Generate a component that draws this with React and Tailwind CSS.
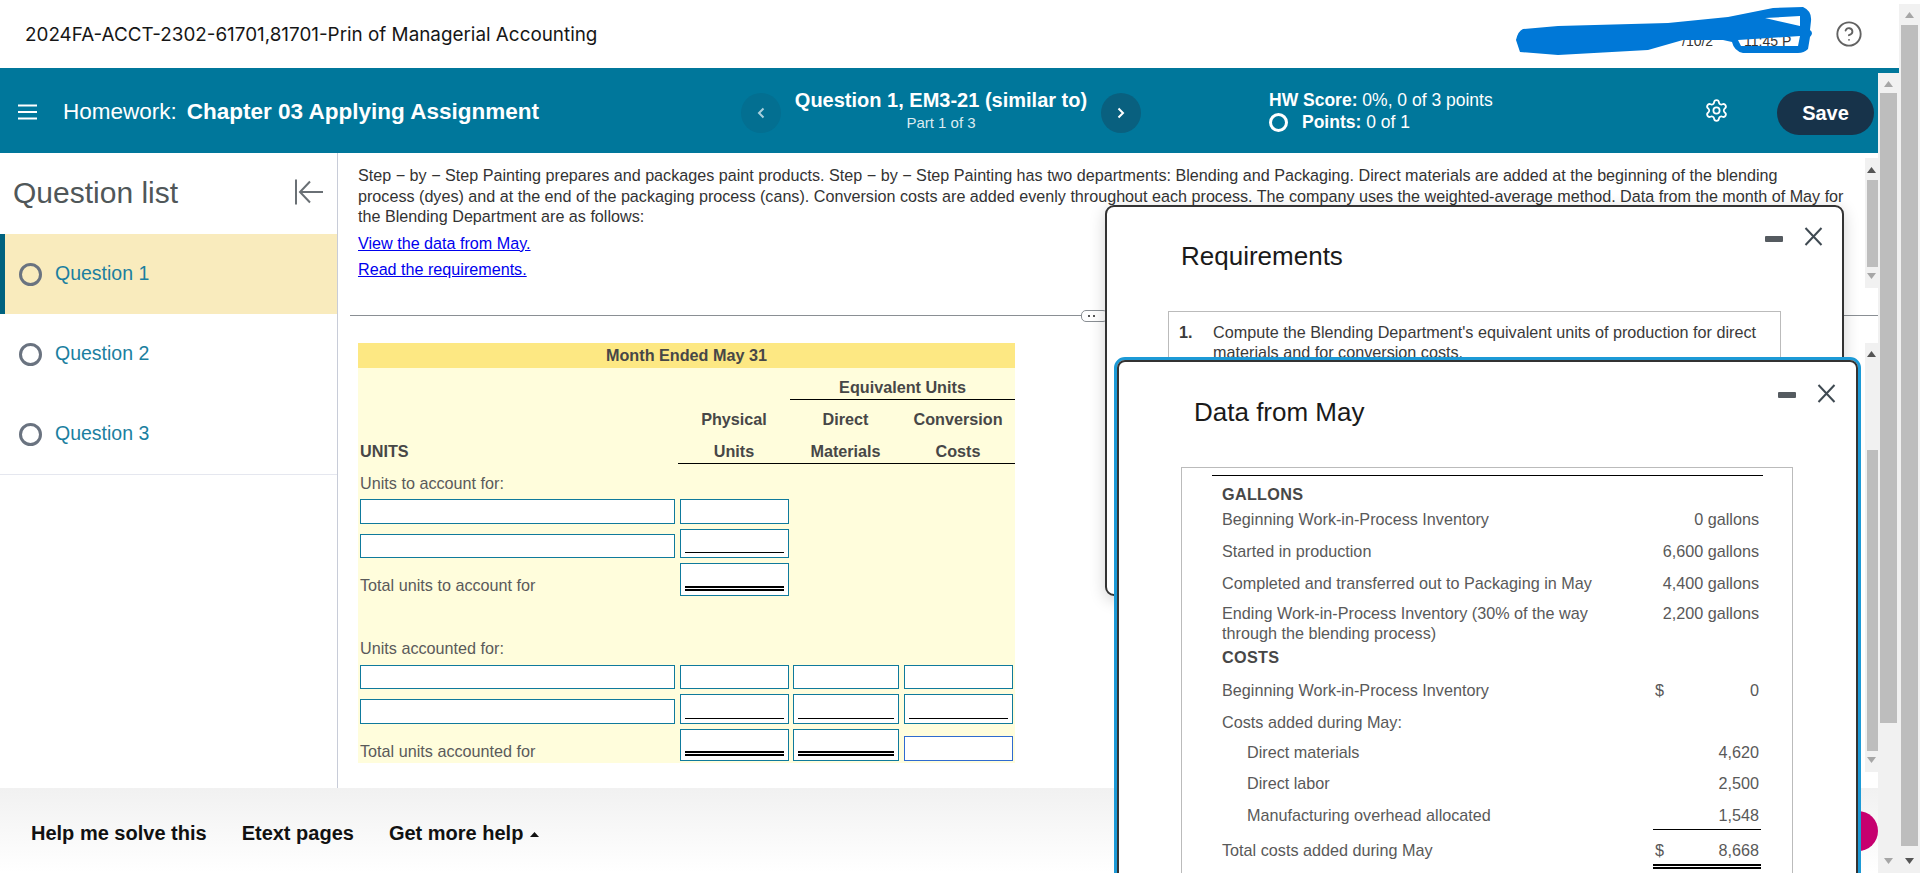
import React from 'react';
import { Settings, CircleHelp } from 'lucide-react';

const questions = ['Question 1', 'Question 2', 'Question 3'];

const Arrow = ({ down, dark }) => (
  <svg width="9" height="6" viewBox="0 0 9 6" className="block mx-auto">
    <polygon points={down ? '0,0 9,0 4.5,6' : '4.5,0 9,6 0,6'} fill={dark ? '#555555' : '#a6a6a6'} />
  </svg>
);

// thumbClass carries the thumb's height and its distance from the top arrow
const Scrollbar = ({ className, thumbClass, upClass, downClass, upDark, downDark }) => (
  <div className={`flex flex-col items-center bg-[#f1f1f1] ${className}`}>
    <div className={upClass}><Arrow dark={upDark} /></div>
    <div className={`bg-[#bdbdbd] ${thumbClass}`} />
    <div className={`mt-auto ${downClass}`}><Arrow down dark={downDark} /></div>
  </div>
);

const Radio = ({ className }) => (
  <span className={`block rounded-full border-[3px] ${className}`} />
);

const Cell = ({ kind, className = '', blue }) => (
  <div className={`flex bg-white border px-[4px] ${blue ? 'border-[#2f6bd0]' : 'border-[#0f7a9c]'} ${kind ? 'pb-[4px]' : ''} ${className}`}>
    {kind === 'single' && <div className="w-full border-b border-black" />}
    {kind === 'double' && <div className="w-full border-b-[5px] border-double border-black" />}
  </div>
);

const UnitsHeader = () => (
  <>
    <div className="flex h-[32px]">
      <div className="w-[432px]" />
      <div className="flex-1 border-b border-black text-center font-bold text-[#474747] leading-[38px]">Equivalent Units</div>
    </div>
    <div className="flex h-[32px] items-center pt-[7px] font-bold text-[#474747]">
      <div className="w-[320px]" />
      <div className="w-[112px] text-center">Physical</div>
      <div className="w-[111px] text-center">Direct</div>
      <div className="w-[114px] text-center">Conversion</div>
    </div>
    <div className="flex h-[32px] items-center font-bold text-[#474747]">
      <div className="w-[320px] pl-[2px] pt-[7px]">UNITS</div>
      <div className="flex flex-1 h-full items-center pt-[7px] border-b border-black">
        <div className="w-[112px] text-center">Units</div>
        <div className="w-[111px] text-center">Materials</div>
        <div className="w-[114px] text-center">Costs</div>
      </div>
    </div>
  </>
);

const DataTable = () => (
  <div className="w-[657px] self-start text-[16.2px] bg-[#fffddc] font-['Liberation_Sans',sans-serif]">
    <div className="h-[25px] bg-[#fde883] text-center font-bold text-[#474747] leading-[25px]">Month Ended May 31</div>
    <UnitsHeader />
    <div className="h-[35px] pl-[2px] pt-[9px] leading-[20px] text-[#5a5a5a]">Units to account for:</div>
    <div className="flex h-[25px] gap-[5px] pl-[2px]">
      <Cell className="w-[315px]" />
      <Cell className="w-[109px]" />
    </div>
    <div className="flex h-[29px] mt-[5px] gap-[5px] pl-[2px] items-end">
      <Cell className="w-[315px] h-[24px]" />
      <Cell className="w-[109px] h-[29px]" kind="single" />
    </div>
    <div className="flex h-[33px] mt-[5px] gap-[5px] pl-[2px]">
      <div className="w-[315px] pt-[12px] leading-[20px] text-[#5a5a5a]">Total units to account for</div>
      <Cell className="w-[109px]" kind="double" />
    </div>
    <div className="h-[69px] pl-[2px] pt-[42px] leading-[20px] text-[#5a5a5a]">Units accounted for:</div>
    <div className="flex h-[24px] pl-[2px]">
      <Cell className="w-[315px]" />
      <Cell className="w-[109px] ml-[5px]" />
      <Cell className="w-[106px] ml-[4px]" />
      <Cell className="w-[109px] ml-[5px]" />
    </div>
    <div className="flex h-[30px] mt-[5px] pl-[2px] items-end">
      <Cell className="w-[315px] h-[25px]" />
      <Cell className="w-[109px] h-[30px] ml-[5px]" kind="single" />
      <Cell className="w-[106px] h-[30px] ml-[4px]" kind="single" />
      <Cell className="w-[109px] h-[30px] ml-[5px]" kind="single" />
    </div>
    <div className="flex h-[32px] mt-[5px] pl-[2px] items-end">
      <div className="w-[315px] leading-[20px] text-[#5a5a5a]">Total units accounted for</div>
      <Cell className="w-[109px] h-[32px] ml-[5px]" kind="double" />
      <Cell className="w-[106px] h-[32px] ml-[4px]" kind="double" />
      <Cell className="w-[109px] h-[25px] ml-[5px]" blue />
    </div>
    <div className="h-[2px]" />
  </div>
);

const CloseX = () => (
  <svg width="19" height="19" viewBox="0 0 19 19" className="block">
    <path d="M1.5 1 L17.5 18 M17.5 1 L1.5 18" stroke="#3f4a52" strokeWidth="2" fill="none" />
  </svg>
);

const ModalControls = ({ minClass }) => (
  <div className="ml-auto flex gap-[21px] items-start">
    <div className={`w-[18px] h-[6px] rounded-[1px] bg-[#555b60] ${minClass}`} />
    <CloseX />
  </div>
);

const rows = [
  { label: 'Beginning Work-in-Process Inventory', value: '0 gallons', gap: 'mt-[5px]' },
  { label: 'Started in production', value: '6,600 gallons', gap: 'mt-[12px]' },
  { label: 'Completed and transferred out to Packaging in May', value: '4,400 gallons', gap: 'mt-[12px]' },
  { label: 'Ending Work-in-Process Inventory (30% of the way', label2: 'through the blending process)', value: '2,200 gallons', gap: 'mt-[10px]' },
];

const costRows = [
  { label: 'Beginning Work-in-Process Inventory', dollar: true, value: '0', gap: 'mt-[13px]' },
  { label: 'Costs added during May:', gap: 'mt-[12px]' },
  { label: 'Direct materials', value: '4,620', gap: 'mt-[10px]', indent: true },
  { label: 'Direct labor', value: '2,500', gap: 'mt-[11px]', indent: true },
  { label: 'Manufacturing overhead allocated', value: '1,548', gap: 'mt-[12px]', indent: true, line: 'single' },
  { label: 'Total costs added during May', dollar: true, value: '8,668', gap: 'mt-[10px]', line: 'double' },
];

const RequirementsModal = () => (
  <div className="absolute left-[1105px] top-[205px] w-[739px] h-[391px] z-10 bg-white border-2 border-[#333333] rounded-[9px] shadow-[0_4px_16px_rgba(0,0,0,0.18)] font-['Liberation_Sans',sans-serif]">
    <div className="flex h-[104px] pl-[74px] pr-[19px] pt-[20px] items-start">
      <div className="mt-[13px] text-[26px] leading-[32px] text-[#1a1a1a]">Requirements</div>
      <ModalControls minClass="mt-[9px]" />
    </div>
    <div className="ml-[61px] w-[613px] border border-[#bbbbbb] pt-[10px] pl-[10px] h-[240px] flex text-[16.2px] leading-[20px] text-[#3a3a3a]">
      <div className="w-[34px] font-bold">1.</div>
      <div>
        Compute the Blending Department's equivalent units of production for direct<br />
        materials and for conversion costs.
      </div>
    </div>
  </div>
);

const DataModal = () => (
  <div className="absolute left-[1114px] top-[357px] w-[747px] h-[540px] z-20 bg-white border-[3px] border-[#1c9ad6] rounded-[11px] font-['Liberation_Sans',sans-serif]">
    <div className="h-full border-2 border-[#333333] rounded-[8px]">
      <div className="flex h-[105px] pl-[75px] pr-[20px] pt-[22px] items-start">
        <div className="mt-[12px] text-[26px] leading-[32px] text-[#1a1a1a]">Data from May</div>
        <ModalControls minClass="mt-[8px]" />
      </div>
      <div className="ml-[62px] w-[612px] h-[430px] border border-[#bbbbbb] pl-[30px] pr-[29px] pt-[7px] text-[16.2px] leading-[20px] text-[#595959]">
        <div className="border-t border-black h-[9px]" />
        <div className="pl-[10px] pr-[2px]">
          <div className="font-bold text-[#474747] tracking-[0.3px]">GALLONS</div>
          {rows.map((row) => (
            <div key={row.value} className={`flex justify-between pr-[2px] ${row.gap}`}>
              <div>{row.label}{row.label2 && <><br />{row.label2}</>}</div>
              <div>{row.value}</div>
            </div>
          ))}
          <div className="mt-[4px] font-bold text-[#474747] tracking-[0.3px]">COSTS</div>
          {costRows.map((row) => (
            <div key={row.label} className={`flex justify-between ${row.gap}`}>
              <div className={row.indent ? 'pl-[25px]' : ''}>{row.label}</div>
              <div className={`w-[108px] flex justify-between pl-[2px] pr-[2px] ${row.line === 'single' ? 'border-b border-black pb-[4px]' : ''} ${row.line === 'double' ? 'border-b-[5px] border-double border-black pb-[4px]' : ''}`}>
                <span>{row.dollar ? '$' : ''}</span>
                <span>{row.value}</span>
              </div>
            </div>
          ))}
        </div>
      </div>
    </div>
  </div>
);

const Scribble = () => (
  <svg width="340" height="62" viewBox="0 0 340 62" className="self-start shrink-0">
    <text x="184" y="43" fontSize="14" fontFamily="Liberation Sans, sans-serif" fill="#333333">/10/2</text>
    <text x="246" y="43" fontSize="14" fontFamily="Liberation Sans, sans-serif" fill="#333333">11:45 P</text>
    <path
      fill="#0078d7"
      fillRule="evenodd"
      d="M18 37 Q20 28 25 26 L60 23 L170 20 L230 14 L275 5 L305 4 Q314 8 313 18 L312 27 Q316 30 312 34 L310 46 Q306 50 300 50 L245 50 Q236 48 234 39 L225 37 L185 37 L150 47 L60 52 L22 49 Z M267 15 L302 13 L302 23 Z M240 37 L302 33 L300 43 L243 43 Z"
    />
  </svg>
);

const App = () => {
  return (
    <div className="relative flex w-[1920px] h-[873px] overflow-hidden bg-white font-['Liberation_Sans',sans-serif]">
      <div className="w-[1899px] flex flex-col">
        {/* Course title */}
        <div className="flex h-[68px] items-center pl-[25px] pr-[36px]">
          <div className="font-['Inter',sans-serif] text-[18.85px] mt-[3px] text-[#161616] whitespace-nowrap">2024FA-ACCT-2302-61701,81701-Prin of Managerial Accounting</div>
          <div className="ml-auto flex items-center">
            <Scribble />
            <CircleHelp size={28} strokeWidth={1.6} color="#626262" className="-ml-[3px]" />
          </div>
        </div>
        <div className="h-[5px] bg-[#00779b]" />
        <div className="flex flex-1 min-h-0">
          <div className="w-[1878px] flex flex-col">
            {/* Homework toolbar */}
            <div className="flex h-[80px] items-center bg-[#00779b] text-white">
              <div className="w-[741px] flex items-center pl-[18px] -mt-[3px]">
                <svg width="19" height="16" viewBox="0 0 19 16" className="mr-[26px]">
                  <path d="M0 1.5H19M0 8H19M0 14.5H19" stroke="#ffffff" strokeWidth="2" />
                </svg>
                <div className="text-[22.5px] whitespace-nowrap">Homework:<b className="ml-[10px]">Chapter 03 Applying Assignment</b></div>
              </div>
              <div className="w-[400px] flex items-center justify-between">
                <div className="w-[40px] h-[40px] rounded-full bg-[#036f91] flex items-center justify-center">
                  <svg width="8" height="12" viewBox="0 0 8 12"><path d="M6.5 1.5 L2 6 L6.5 10.5" fill="none" stroke="#a9cfdc" strokeWidth="2" /></svg>
                </div>
                <div className="text-center -mt-[6px]">
                  <div className="text-[20px] leading-[24px] font-bold">Question 1, EM3-21 (similar to)</div>
                  <div className="text-[15px] leading-[20px] mt-[1px] text-[#dcebf1]">Part 1 of 3</div>
                </div>
                <div className="w-[40px] h-[40px] rounded-full bg-[#09607f] flex items-center justify-center">
                  <svg width="8" height="12" viewBox="0 0 8 12"><path d="M1.5 1.5 L6 6 L1.5 10.5" fill="none" stroke="#ffffff" strokeWidth="2" /></svg>
                </div>
              </div>
              <div className="ml-[128px] text-[17.5px] leading-[22px] -mt-[4px]">
                <div><b>HW Score:</b> 0%, 0 of 3 points</div>
                <div className="flex items-center">
                  <Radio className="w-[19px] h-[19px] border-white border-[2px] mr-[14px]" />
                  <div><b>Points:</b> 0 of 1</div>
                </div>
              </div>
              <div className="ml-auto flex items-center pr-[4px]">
                <Settings size={25} strokeWidth={1.7} color="#ffffff" className="mr-[48px] -mt-[5px]" />
                <div className="w-[97px] h-[44px] -mt-[1px] rounded-full bg-[#17334a] flex items-center justify-center text-[20px] font-bold">Save</div>
              </div>
            </div>

            <div className="flex flex-1 min-h-0">
              {/* Question list */}
              <div className="w-[338px] shrink-0 border-r border-[#c8ccd8]">
                <div className="flex h-[81px] items-center justify-between pl-[13px] pr-[13px] pb-[3px]">
                  <div className="text-[30px] text-[#505759]">Question list</div>
                  <svg width="30" height="26" viewBox="0 0 30 26" fill="none" stroke="#6a7075" strokeWidth="2">
                    <path d="M2 0.5V25.5M29 13H7M16 2.5L6 13L16 23.5" />
                  </svg>
                </div>
                <div className="border-b border-[#e5e7ef]">
                  {questions.map((q, i) => (
                    <div key={q} className={`flex h-[80px] items-center gap-[13px] ${i === 0 ? 'bg-[#f9ebbd] border-l-[5px] border-[#00627f] pl-[14px]' : 'pl-[19px]'}`}>
                      <Radio className="w-[23px] h-[23px] border-[#6a7380]" />
                      <div className="text-[19.5px] text-[#1b7fa0]">{q}</div>
                    </div>
                  ))}
                </div>
              </div>

              {/* Question pane */}
              <div className="flex-1 min-w-0 relative flex flex-col">
                <div className="flex h-[162px]">
                  <div className="flex-1 min-w-0 pl-[20px] pt-[12px] text-[16.15px] text-[#333333]">
                    <p className="leading-[20.5px] whitespace-nowrap">
                      Step − by − Step Painting prepares and packages paint products. Step − by − Step Painting has two departments: Blending and Packaging. Direct materials are added at the beginning of the blending<br />
                      process (dyes) and at the end of the packaging process (cans). Conversion costs are added evenly throughout each process. The company uses the weighted-average method. Data from the month of May for<br />
                      the Blending Department are as follows:
                    </p>
                    <a href="#data" className="block mt-[6px] leading-[20px] text-[#0000ee] underline">View the data from May.</a>
                    <a href="#reqs" className="block mt-[6px] leading-[20px] text-[#0000ee] underline">Read the requirements.</a>
                  </div>
                  <Scrollbar
                    className="w-[13px] h-[130px] mt-[5px] pt-[9px] pb-[9px]"
                    upClass="h-[13px]"
                    thumbClass="w-[11px] h-[87px] ml-[2px]"
                    downClass=""
                    upDark
                  />
                </div>
                <div className="h-px ml-[12px] bg-[#8a8f94]" />
                <div className="absolute left-[743px] top-[157px] w-[27px] h-[12px] bg-white border border-[#8a8f94] rounded-[5px] flex items-center pl-[6px] gap-[3px]">
                  <span className="w-[2px] h-[2px] bg-[#555555]" />
                  <span className="w-[2px] h-[2px] bg-[#555555]" />
                </div>
                <div className="flex flex-1 min-h-0 pl-[20px] pt-[27px] justify-between">
                  <DataTable />
                  <Scrollbar
                    className="w-[13px] h-[429px] pt-[8px] pb-[9px]"
                    upClass="h-[14px]"
                    thumbClass="w-[11px] h-[301px] mt-[85px] ml-[2px]"
                    downClass=""
                    upDark
                  />
                </div>
              </div>
            </div>

            {/* Help bar */}
            <div className="relative flex h-[85px] items-center pl-[31px] pt-[4px] text-[20px] font-bold text-[#111111] bg-gradient-to-b from-[#f1f1f1] to-[#ffffff]">
              <div>Help me solve this</div>
              <div className="ml-[35px]">Etext pages</div>
              <div className="ml-[35px] flex items-center">
                Get more help
                <svg width="9" height="5" viewBox="0 0 9 5" className="ml-[7px] mt-[3px]"><polygon points="4.5,0 9,5 0,5" fill="#111111" /></svg>
              </div>
              <div className="absolute right-0 top-[23px] w-[40px] h-[40px] rounded-full bg-[#c6006f]" />
            </div>
          </div>
          <Scrollbar
            className="w-[21px] pt-[8px] pb-[9px]"
            upClass="h-[12px]"
            thumbClass="w-[17px] h-[630px]"
            downClass=""
          />
        </div>
      </div>
      <Scrollbar
        className="w-[21px] h-[869px] mt-[4px] pt-[8px] pb-[9px]"
        upClass="h-[13px]"
        thumbClass="w-[17px] h-[821px]"
        downClass=""
        downDark
      />
      <RequirementsModal />
      <DataModal />
    </div>
  );
};

export default App;
